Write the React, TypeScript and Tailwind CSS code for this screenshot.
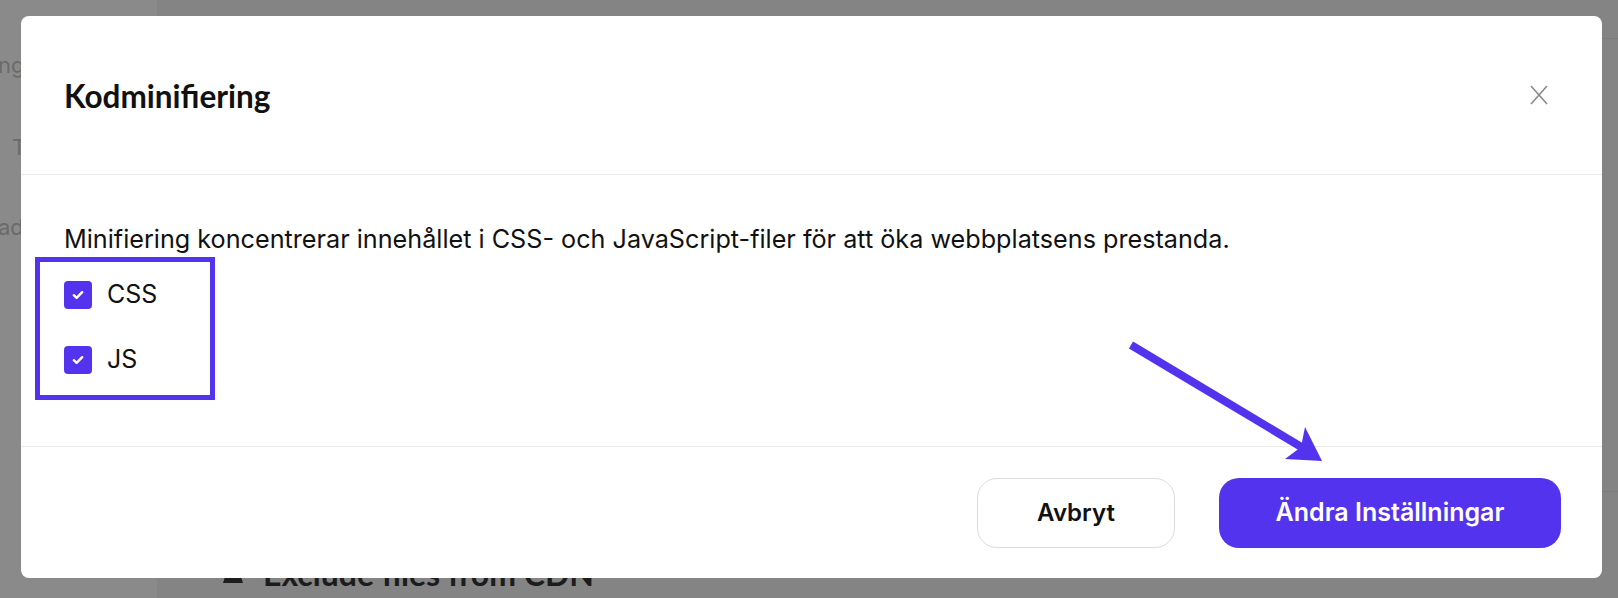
import React from "react";

function Check() {
  return (
    <span className="flex h-[28px] w-[28px] items-center justify-center rounded-[4px] bg-[#5333ed]">
      <svg width="12" height="10" viewBox="0 0 12 10" fill="none">
        <path d="M1.8 5.2 L4.6 7.8 L10.2 2.2" stroke="white" strokeWidth="2.4" strokeLinecap="round" strokeLinejoin="round" />
      </svg>
    </span>
  );
}

export default function App() {
  return (
    <div className="relative h-[598px] w-[1618px] overflow-hidden bg-[#848484] font-['Inter',sans-serif]">
      {/* background page */}
      <div className="flex h-full">
        <aside className="flex w-[157px] flex-col bg-[#8a8a8a] pt-[50px] text-[22px] text-[#6a6a6a]">
          <span className="-ml-[2px] leading-[30px]">ngar</span>
          <span className="ml-[12px] mt-[52px] leading-[30px]">Tema</span>
          <span className="-ml-[2px] mt-[50px] leading-[30px]">adon</span>
        </aside>
        <main className="flex flex-1 flex-col">
          <div className="mt-[38px] h-[459px] border-y border-[#7c7c7c]" />
          <div className="flex items-center gap-[20px] pl-[66px] pt-[58px]">
            <span className="h-[18px] w-[20px] bg-[#1c1c1c] [clip-path:polygon(30%_0,70%_0,100%_100%,0_100%)]" />
            <span className="font-['Lato',sans-serif] text-[32px] font-bold text-[#1c1c1c]">Exclude files from CDN</span>
          </div>
        </main>
      </div>

      {/* modal */}
      <div className="absolute left-[21px] top-[16px] flex h-[562px] w-[1581px] flex-col rounded-[8px] bg-white">
        <div className="flex h-[159px] items-center justify-between border-b border-[#ebebeb] pl-[43px] pr-[54px] pt-[3px]">
          <h2 className="font-['Lato',sans-serif] text-[31.5px] font-bold leading-none text-[#111]">Kodminifiering</h2>
          <svg width="18" height="20" viewBox="0 0 18 20" fill="none" className="-mt-[3px]">
            <path d="M1 1 L17 19 M17 1 L1 19" stroke="#8a8a8a" strokeWidth="1.6" />
          </svg>
        </div>
        <div className="flex flex-1 flex-col pl-[43px] pt-[48px]">
          <p className="text-[25.2px] leading-[32px] text-[#111]">
            Minifiering koncentrerar innehållet i CSS- och JavaScript-filer för att öka webbplatsens prestanda.
          </p>
          <label className="mt-[26px] flex h-[28px] items-center gap-[15px] text-[25px] text-[#111]">
            <Check />
            CSS
          </label>
          <label className="mt-[37px] flex h-[28px] items-center gap-[15px] text-[25px] text-[#111]">
            <Check />
            JS
          </label>
        </div>
        <div className="flex h-[132px] items-center justify-end gap-[44px] border-t border-[#ebebeb] pr-[41px]">
          <button className="h-[70px] w-[198px] rounded-[20px] border border-[#dcdcdc] bg-white text-[24px] font-semibold text-[#111]">
            Avbryt
          </button>
          <button className="h-[70px] w-[342px] rounded-[20px] bg-[#5333ed] text-[25px] font-semibold text-white">
            Ändra Inställningar
          </button>
        </div>
      </div>

      {/* annotations */}
      <div className="pointer-events-none absolute left-[35px] top-[257px] h-[143px] w-[180px] border-[5px] border-[#5333ed]" />
      <svg className="pointer-events-none absolute left-0 top-0" width="1618" height="598" viewBox="0 0 1618 598">
        <line x1="1131" y1="345" x2="1303" y2="448" stroke="#5333ed" strokeWidth="8" />
        <polygon points="1322,461 1305,427 1301,447 1285,459" fill="#5333ed" />
      </svg>
    </div>
  );
}
